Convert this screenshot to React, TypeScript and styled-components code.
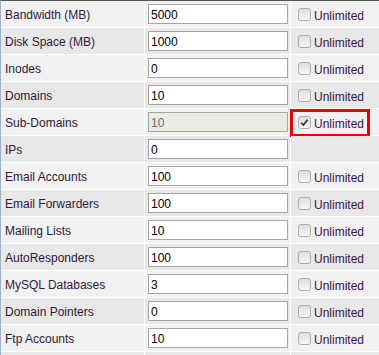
import React from "react";
import styled, { createGlobalStyle } from "styled-components";

const Global = createGlobalStyle`
  html, body { margin: 0; padding: 0; background: #ffffff; }
  body { font-family: "Liberation Sans", Arial, sans-serif; font-size: 12px; }
`;

const Table = styled.div`
  display: flex;
  flex-direction: column;
  gap: 1px;
  width: 379px;
  background: #ffffff;
  border-top: 1px solid #555555;
  border-left: 1px solid #9fb0c6;
  box-sizing: border-box;
`;

const Row = styled.div`
  display: grid;
  grid-template-columns: 143px 145px 1fr;
  column-gap: 1px;
  height: 26px;
`;

const Cell = styled.div<{ $alt: boolean }>`
  position: relative;
  display: flex;
  align-items: center;
  background: ${(p) => (p.$alt ? "#e8e8e8" : "#f1f1f1")};
`;

const Label = styled(Cell)`
  padding-left: 4px;
  color: #2e1a3a;
  padding-top: 1px;
`;

const InputCell = styled(Cell)`
  padding-left: 3px;
`;

const Input = styled.input`
  box-sizing: border-box;
  width: 140px;
  height: 20px;
  margin: 0;
  padding: 1px 2px 0;
  border: 1px solid #a5a5a5;
  background: #ffffff;
  color: #000000;
  font-family: "Liberation Sans", Arial, sans-serif;
  font-size: 12px;
  outline: none;
  &:disabled {
    background: #ebebe4;
    color: #6d6d6d;
  }
`;

const CheckCell = styled(Cell)`
  padding-left: 7px;
  gap: 3px;
`;

const Box = styled.span`
  box-sizing: border-box;
  width: 13px;
  height: 13px;
  border: 1px solid #adadad;
  border-radius: 3px;
  background: linear-gradient(#dedede, #f6f6f6);
  display: flex;
  align-items: center;
  justify-content: center;
  margin-top: 1px;
`;

const Unl = styled.span`
  color: #3a1446;
  padding-top: 4px;
`;

const Highlight = styled.span`
  position: absolute;
  left: -1px;
  top: 0;
  width: 80px;
  height: 28px;
  box-sizing: border-box;
  border: 3px solid #ee0000;
  pointer-events: none;
`;

type R = { label: string; value: string; check: boolean; disabled?: boolean; checked?: boolean; highlight?: boolean };

const rows: R[] = [
  { label: "Bandwidth (MB)", value: "5000", check: true },
  { label: "Disk Space (MB)", value: "1000", check: true },
  { label: "Inodes", value: "0", check: true },
  { label: "Domains", value: "10", check: true },
  { label: "Sub-Domains", value: "10", check: true, disabled: true, checked: true, highlight: true },
  { label: "IPs", value: "0", check: false },
  { label: "Email Accounts", value: "100", check: true },
  { label: "Email Forwarders", value: "100", check: true },
  { label: "Mailing Lists", value: "10", check: true },
  { label: "AutoResponders", value: "100", check: true },
  { label: "MySQL Databases", value: "3", check: true },
  { label: "Domain Pointers", value: "0", check: true },
  { label: "Ftp Accounts", value: "10", check: true },
  { label: "", value: "", check: false },
];

const Check = () => (
  <svg width="9" height="9" viewBox="0 0 9 9">
    <path d="M1.2 4.8 L3.4 7 L7.6 1.6" fill="none" stroke="#3a3a3a" strokeWidth="1.8" />
  </svg>
);

export default function App() {
  return (
    <>
      <Global />
      <Table>
        {rows.map((r, i) => {
          const alt = i % 2 === 1;
          const last = i === rows.length - 1;
          return (
            <Row key={i}>
              <Label $alt={alt}>{r.label}</Label>
              <InputCell $alt={alt}>
                {!last && <Input defaultValue={r.value} disabled={r.disabled} />}
              </InputCell>
              <CheckCell $alt={alt}>
                {r.check && (
                  <>
                    <Box>{r.checked && <Check />}</Box>
                    <Unl>Unlimited</Unl>
                  </>
                )}
                {r.highlight && <Highlight />}
              </CheckCell>
            </Row>
          );
        })}
      </Table>
    </>
  );
}
